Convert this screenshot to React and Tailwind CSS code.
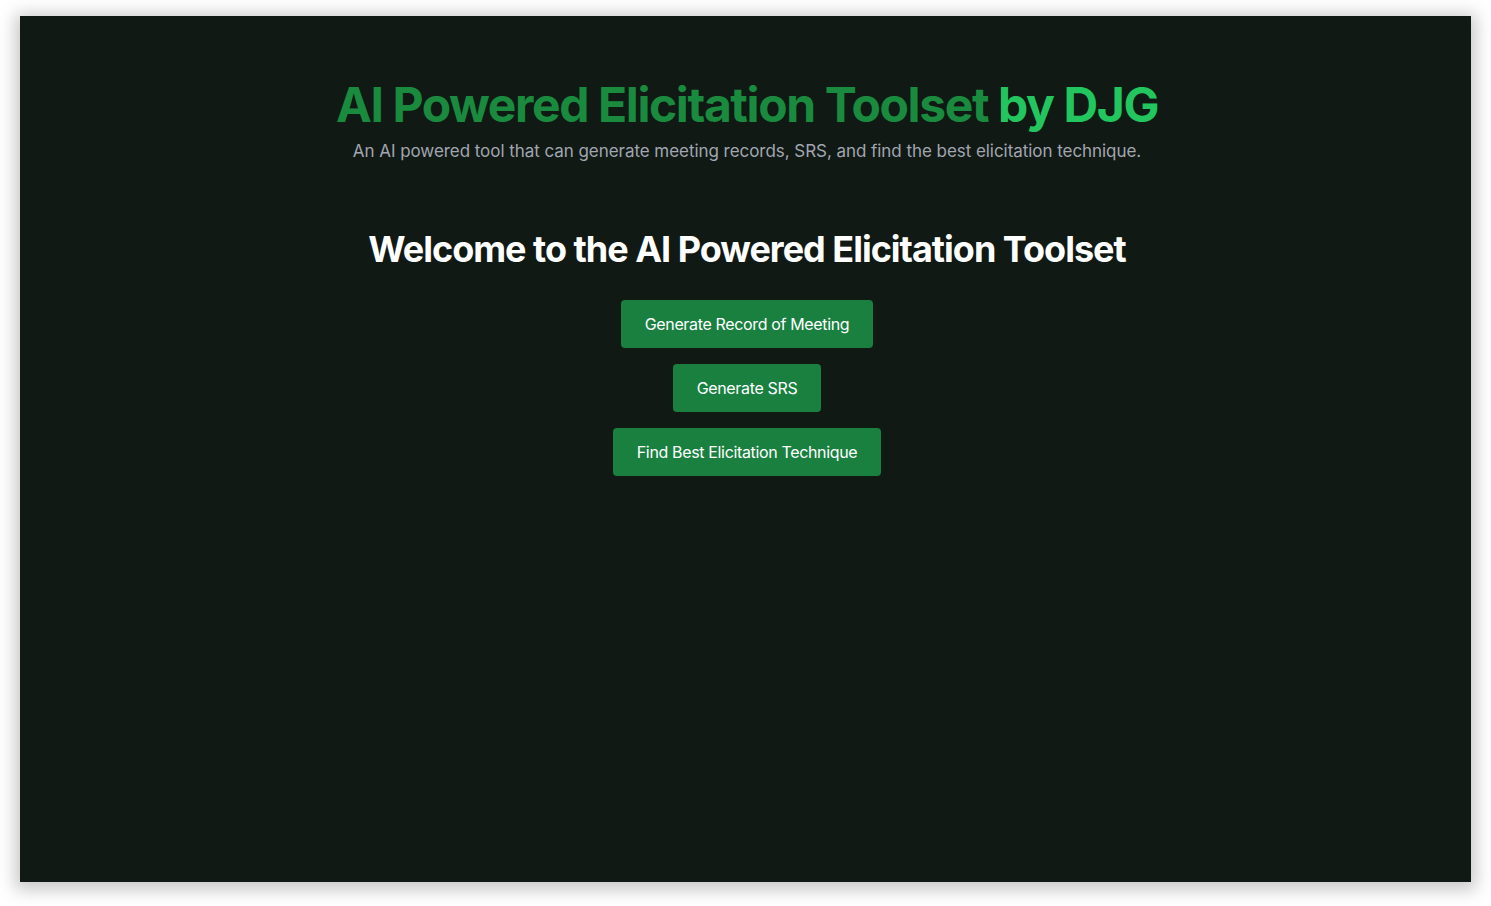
export default function App() {
  return (
    <div className="w-[1491px] h-[906px] bg-white pt-[16px] pl-[20px] pr-[20px] pb-[24px]" style={{ fontFamily: "Inter, 'Noto Sans', sans-serif" }}>
      <div className="w-full h-full bg-[#111915] shadow-[0_3px_16px_5px_rgba(0,0,0,0.22)] flex flex-col items-center pl-[3px]">
        <h1 className="mt-[65px] text-[48px] leading-[48px] font-bold tracking-[-1.4px] text-[#198a3e]">
          AI Powered Elicitation Toolset <span className="text-[#22c55e]">by DJG</span>
        </h1>
        <p className="mt-[9px] text-[17px] leading-[26px] text-[#a1a6b0] tracking-[-0.05px]">
          An AI powered tool that can generate meeting records, SRS, and find the best elicitation technique.
        </p>
        <h2 className="mt-[65px] text-[36px] leading-[40px] font-bold text-white tracking-[-1px]">
          Welcome to the AI Powered Elicitation Toolset
        </h2>
        <div className="mt-[31px] flex flex-col items-center gap-[16px]">
          <button className="h-[48px] px-6 rounded-[4px] bg-[#198040] text-white text-[16px] tracking-[-0.35px]">Generate Record of Meeting</button>
          <button className="h-[48px] px-6 rounded-[4px] bg-[#198040] text-white text-[16px] tracking-[-0.35px]">Generate SRS</button>
          <button className="h-[48px] px-6 rounded-[4px] bg-[#198040] text-white text-[16px] tracking-[-0.35px]">Find Best Elicitation Technique</button>
        </div>
      </div>
    </div>
  );
}
